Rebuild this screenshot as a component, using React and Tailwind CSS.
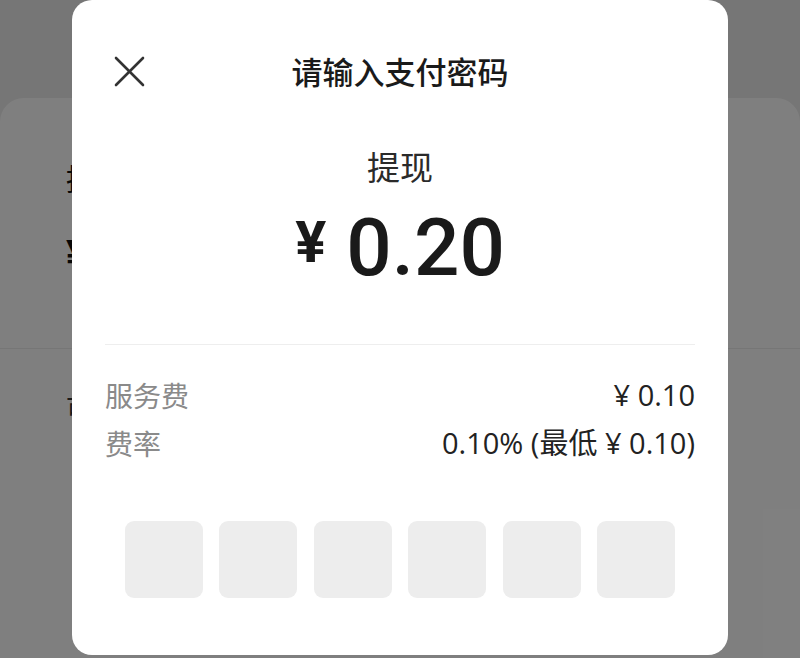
export default function App() {
  const cjk = { fontFamily: '"Noto Sans CJK SC", "Noto Sans", sans-serif' };
  const latin = { fontFamily: '"Open Sans", "Noto Sans CJK SC", sans-serif' };
  return (
    <div className="relative w-[800px] h-[658px] overflow-hidden bg-[#ededed]" style={cjk}>
      {/* underlying page */}
      <div className="h-full pt-[98px]">
        <div className="h-full bg-white rounded-t-[24px] pt-[62px]">
          <div className="pl-[66px] text-[30px] leading-[34px] text-[#111]">提</div>
          <div className="pl-[66px] mt-[38px] flex items-center h-[48px]">
            <span className="text-[40px] font-bold text-[#111]" style={{ fontFamily: 'Roboto, sans-serif' }}>¥</span>
          </div>
          <div className="mt-[68px] h-px bg-[#ececec]" />
          <div className="pl-[66px] mt-[38px] text-[26px] text-[#333]">可</div>
        </div>
      </div>
      <div className="absolute inset-0 bg-black/50" />

      {/* modal */}
      <div className="absolute left-[72px] top-0 w-[656px] h-[655px] bg-white rounded-[20px] flex flex-col">
        <div className="mt-[53px] h-[36px] grid grid-cols-[1fr_auto_1fr] items-center">
          <div className="pl-[42px] flex items-center">
            <svg width="31" height="31" viewBox="0 0 31 31" fill="none" stroke="#333" strokeWidth="2.6" strokeLinecap="round">
              <line x1="2" y1="2" x2="29" y2="29" />
              <line x1="29" y1="2" x2="2" y2="29" />
            </svg>
          </div>
          <div className="text-[31px] leading-[36px] font-medium text-[#1a1a1a]">请输入支付密码</div>
          <div />
        </div>

        <div className="mt-[58px] h-[40px] flex items-center justify-center text-[33px] text-[#2a2a2a]">提现</div>

        <div className="mt-[21px] h-[80px] flex items-start justify-center text-[#1a1a1a]" style={{ fontFamily: 'Roboto, sans-serif' }}>
          <span className="mt-[5px] text-[58px] leading-none font-bold">¥</span>
          <span className="ml-[20px] text-[80px] leading-[80px] font-medium">0.20</span>
        </div>

        <div className="mt-[56px] mx-[33px] h-px bg-[#eeeeee]" />

        <div className="mt-[30px] mx-[33px] flex flex-col gap-[8px]">
          <div className="h-[40px] flex items-center justify-between">
            <span className="text-[28px] text-[#8a8a8a]">服务费</span>
            <span className="text-[29px] text-[#222]" style={latin}>¥ 0.10</span>
          </div>
          <div className="h-[40px] flex items-center justify-between">
            <span className="text-[28px] text-[#8a8a8a]">费率</span>
            <span className="text-[29px] text-[#222]" style={latin}>0.10% (最低 ¥ 0.10)</span>
          </div>
        </div>

        <div className="mt-[58px] mx-[53px] flex justify-between">
          {[0, 1, 2, 3, 4, 5].map((i) => (
            <div key={i} className="w-[78px] h-[77px] rounded-[9px] bg-[#ededed]" />
          ))}
        </div>
      </div>
    </div>
  );
}
